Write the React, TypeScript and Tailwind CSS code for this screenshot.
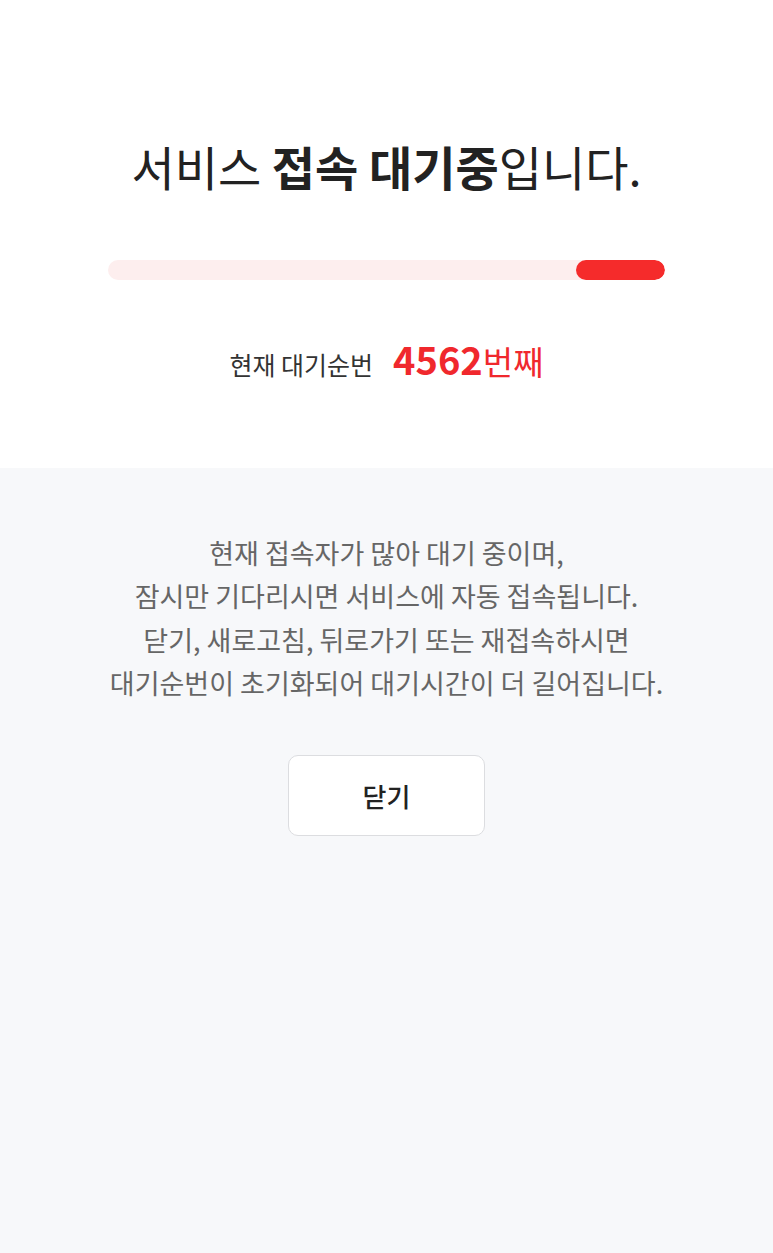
export default function App() {
  const progress = 16;

  return (
    <div className="min-h-[1253px] flex flex-col bg-[#f7f8fa] font-['Noto_Sans_CJK_KR','Noto_Sans',sans-serif]">
      <section className="h-[468px] bg-white flex flex-col items-center pt-[138px]">
        <h1 className="text-[47px] leading-[56px] text-[#222222]">
          서비스 <strong className="font-bold">접속 대기중</strong>입니다.
        </h1>

        <div className="mt-[66px] w-[557px] h-[20px] rounded-full bg-[#fdeeee] flex justify-end overflow-hidden">
          <div className="h-full rounded-full bg-[#f52b2b]" style={{ width: `${progress}%` }} />
        </div>

        <div className="mt-[50px] flex items-baseline gap-[20px]">
          <span className="text-[25px] text-[#333333]">현재 대기순번</span>
          <span className="text-[#f0282d]">
            <span className="text-[38px] font-bold">4562</span>
            <span className="text-[33px]">번째</span>
          </span>
        </div>
      </section>

      <section className="flex flex-col items-center pt-[63px] text-[27px] leading-[43px] text-[#666666] text-center">
        <p>
          현재 접속자가 많아 대기 중이며,
          <br />
          잠시만 기다리시면 서비스에 자동 접속됩니다.
        </p>
        <p className="mt-[1px]">
          닫기, 새로고침, 뒤로가기 또는 재접속하시면
          <br />
          대기순번이 초기화되어 대기시간이 더 길어집니다.
        </p>

        <button className="mt-[51px] w-[197px] h-[81px] bg-white border-[1.5px] border-[#dcdde0] rounded-[10px] text-[26px] font-medium text-[#222222]">
          닫기
        </button>
      </section>
    </div>
  );
}
